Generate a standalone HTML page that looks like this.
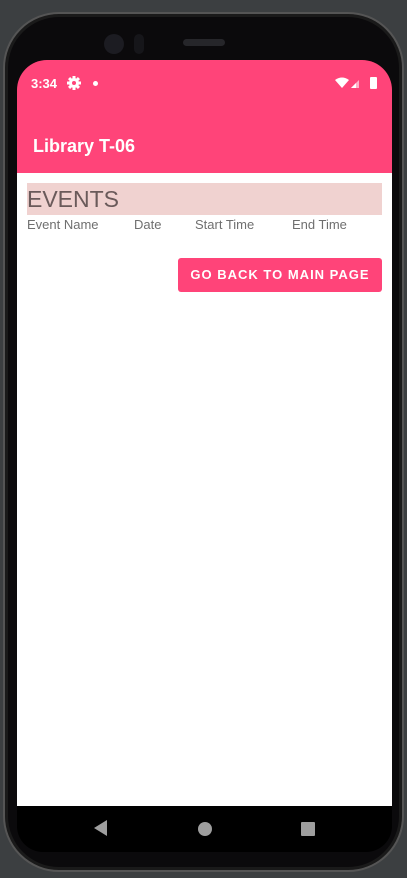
<!DOCTYPE html>
<html><head><style>
*{margin:0;padding:0;box-sizing:border-box}
body{width:407px;height:878px;background:#3c3f41;position:relative;overflow:hidden;font-family:"Liberation Sans",Roboto,sans-serif}
.phone{position:absolute;left:3px;top:12px;width:401px;height:860px;background:#0b0a0c;border-radius:56px;border:2px solid #555;box-shadow:inset 0 0 0 3px #1a1a1a}
.screen{position:absolute;left:17px;top:60px;width:375px;height:792px;background:#000;border-radius:30px 30px 26px 26px;overflow:hidden}
.hdr{position:absolute;left:0;top:0;width:375px;height:113px;background:#ff4479}
.content{position:absolute;left:0;top:113px;width:375px;height:633px;background:#fff}
.abs{position:absolute}
</style></head><body>
<div class="phone"></div>
<div class="abs" style="left:104px;top:34px;width:20px;height:20px;border-radius:50%;background:#1c1c22"></div>
<div class="abs" style="left:134px;top:34px;width:10px;height:20px;border-radius:5px;background:#16161a"></div>
<div class="abs" style="left:183px;top:39px;width:42px;height:7px;border-radius:4px;background:#26262a"></div>
<div class="screen">
 <div class="hdr">
  <div class="abs" style="left:14px;top:16px;color:#fff;font-size:13px;font-weight:bold">3:34</div>
  <svg class="abs" style="left:50px;top:16px" width="14" height="14" viewBox="0 0 14 14"><g fill="#fff"><circle cx="7" cy="7" r="5"/><rect x="5.5" y="0" width="3" height="14"/><rect x="0" y="5.5" width="14" height="3"/><rect x="5.5" y="0" width="3" height="14" transform="rotate(45 7 7)"/><rect x="5.5" y="0" width="3" height="14" transform="rotate(-45 7 7)"/></g><circle cx="7" cy="7" r="2" fill="#ff4479"/></svg>
  <div class="abs" style="left:76px;top:21px;width:5px;height:5px;border-radius:50%;background:#fff"></div>
  <svg class="abs" style="left:318px;top:17px" width="44" height="14"><path d="M0 3 Q7-2 14 3 L7 11Z" fill="#fff"/><path d="M16 11 L24 3 L24 11Z" fill="#ffb0c8"/><path d="M16 11 L21 6 L21 11Z" fill="#fff"/><rect x="35" y="0" width="7" height="12" rx="1" fill="#fff"/></svg>
  <div class="abs" style="left:16px;top:76px;color:#fff;font-size:18px;font-weight:bold">Library T-06</div>
 </div>
 <div class="content">
  <div class="abs" style="left:10px;top:10px;width:355px;height:32px;background:#f0d2d0;color:#6a5a5a;font-size:23px;line-height:33px">EVENTS</div>
  <div class="abs" style="left:10px;top:44px;color:#6f6f6f;font-size:13px">Event Name</div>
  <div class="abs" style="left:117px;top:44px;color:#6f6f6f;font-size:13px">Date</div>
  <div class="abs" style="left:178px;top:44px;color:#6f6f6f;font-size:13px">Start Time</div>
  <div class="abs" style="left:275px;top:44px;color:#6f6f6f;font-size:13px">End Time</div>
  <div class="abs" style="left:161px;top:145px;top:145px"></div>
  <div class="abs" style="left:161px;top:145px"></div>
  <div class="abs" style="left:161px;top:145px"></div>
  <div class="abs" style="left:161px;top:85px;width:204px;height:34px;background:#ff4479;border-radius:3px;color:#fff;font-size:13px;letter-spacing:1px;text-align:center;line-height:34px;font-weight:bold">GO BACK TO MAIN PAGE</div>
 </div>
 <svg class="abs" style="left:0;top:746px" width="375" height="46"><path d="M77 22 L90 14 L90 30Z" fill="#9e9e9e"/><circle cx="188" cy="23" r="7" fill="#9e9e9e"/><rect x="284" y="16" width="14" height="14" rx="1" fill="#9e9e9e"/></svg>
</div>
</body></html>
